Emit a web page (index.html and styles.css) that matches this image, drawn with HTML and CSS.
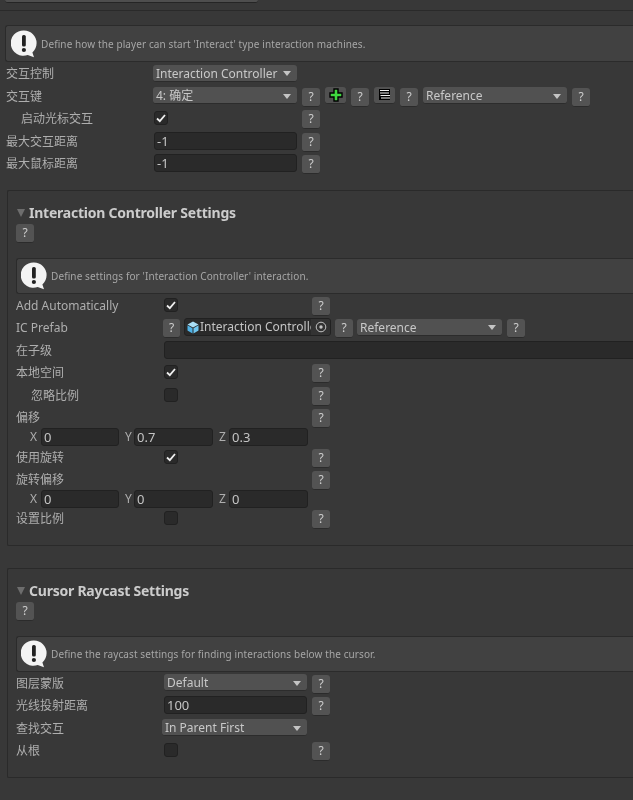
FILE: index.html
```html
<!DOCTYPE html>
<html lang="zh">
<head>
<meta charset="utf-8">
<title>Inspector</title>
<link rel="stylesheet" href="styles.css">
</head>
<body>
<svg class="defs" width="0" height="0" aria-hidden="true">
  <symbol id="bubble" viewBox="0 0 26 28">
    <path d="M13 .5a12.6 12.6 0 0 1 12.6 12.6c0 3.8-1.6 7-4.2 9.3l1.6 4.8-6.3-2.3A12.6 12.6 0 1 1 13 .5z" fill="#f4f4f4"/>
    <rect x="11" y="5" width="3.8" height="11.5" rx="1.6" fill="#222"/>
    <circle cx="12.9" cy="20" r="2.1" fill="#222"/>
  </symbol>
  <symbol id="tick" viewBox="0 0 12 12">
    <path d="M2 6.500l2.800 2.600L10 3" fill="none" stroke="#eee" stroke-width="1.800"/>
  </symbol>
</svg>
<div class="page">
  <div class="top-strip"><div class="top-drop"></div></div>
  <div class="top-gap"></div>

  <div class="help help-top">
    <svg class="bubble"><use href="#bubble"/></svg>
    <span>Define how the player can start 'Interact' type interaction machines.</span>
  </div>

  <div class="rows rows-top">
    <div class="row"><label class="lbl">交互控制</label><div class="drop"><span>Interaction Controller</span><i></i></div></div>
    <div class="row"><label class="lbl">交互键</label><div class="drop"><span>4: 确定</span><i></i></div><button class="q">?</button>
      <div class="icon-btn"><svg width="14" height="14" viewBox="0 0 14 14"><path d="M5 1h4v4h4v4H9v4H5V9H1V5h4z" fill="#3fd83f" stroke="#000" stroke-width="1.400"/></svg></div><button class="q">?</button>
      <div class="icon-btn"><svg width="14" height="14" viewBox="0 0 14 14"><rect x="1" y="1" width="11" height="11" fill="#000"/><path d="M2 2.500h9M2 5h9M2.500 7.500h9.500M3 10h9" stroke="#f2f2f2" stroke-width="1.100"/></svg></div><button class="q">?</button>
      <div class="drop"><span>Reference</span><i></i></div><button class="q">?</button></div>
    <div class="row"><label class="lbl ind">启动光标交互</label><div class="slot"><div class="chk"><svg><use href="#tick"/></svg></div></div><button class="q">?</button></div>
    <div class="row"><label class="lbl">最大交互距离</label><div class="field">-1</div><button class="q">?</button></div>
    <div class="row"><label class="lbl">最大鼠标距离</label><div class="field">-1</div><button class="q">?</button></div>
  </div>

  <section class="sec sec-ic">
    <h2 class="title"><i class="fold"></i>Interaction Controller Settings</h2>
    <button class="q q-solo">?</button>
    <div class="help">
      <svg class="bubble"><use href="#bubble"/></svg>
      <span>Define settings for 'Interaction Controller' interaction.</span>
    </div>
    <div class="rows">
      <div class="row"><label class="lbl">Add Automatically</label><div class="slot"><div class="chk"><svg><use href="#tick"/></svg></div></div><button class="q">?</button></div>
      <div class="row"><label class="lbl">IC Prefab</label><button class="q q-first">?</button>
        <div class="obj">
          <svg class="cube" width="12" height="13" viewBox="0 0 12 13"><path d="M6 .5l5.500 3L6 6.500.5 3.500z" fill="#a9def5"/><path d="M.5 4.300L5.500 7.200v5.300L.5 9.600z" fill="#4fb2e6"/><path d="M11.500 4.300L6.500 7.200v5.300l5-2.900z" fill="#6fc6ef"/></svg>
          <span class="obj-name">Interaction Controller</span>
          <span class="target"><svg width="12" height="12" viewBox="0 0 12 12"><circle cx="6" cy="6" r="4.800" fill="none" stroke="#c4c4c4"/><circle cx="6" cy="6" r="1.700" fill="#c4c4c4"/></svg></span>
        </div>
        <button class="q">?</button>
        <div class="drop"><span>Reference</span><i></i></div><button class="q">?</button></div>
      <div class="row"><label class="lbl">在子级</label><div class="field field-wide"></div></div>
      <div class="row"><label class="lbl">本地空间</label><div class="slot"><div class="chk"><svg><use href="#tick"/></svg></div></div><button class="q">?</button></div>
      <div class="row"><label class="lbl ind">忽略比例</label><div class="slot"><div class="chk"></div></div><button class="q">?</button></div>
      <div class="row"><label class="lbl">偏移</label><div class="slot"></div><button class="q">?</button></div>
      <div class="vec">
        <label>X</label><div class="field">0</div>
        <label>Y</label><div class="field">0.7</div>
        <label>Z</label><div class="field">0.3</div>
      </div>
      <div class="row"><label class="lbl">使用旋转</label><div class="slot"><div class="chk"><svg><use href="#tick"/></svg></div></div><button class="q">?</button></div>
      <div class="row"><label class="lbl">旋转偏移</label><div class="slot"></div><button class="q">?</button></div>
      <div class="vec vec-tight">
        <label>X</label><div class="field">0</div>
        <label>Y</label><div class="field">0</div>
        <label>Z</label><div class="field">0</div>
      </div>
      <div class="row"><label class="lbl">设置比例</label><div class="slot"><div class="chk"></div></div><button class="q">?</button></div>
    </div>
  </section>

  <section class="sec sec-ray">
    <h2 class="title"><i class="fold"></i>Cursor Raycast Settings</h2>
    <button class="q q-solo">?</button>
    <div class="help">
      <svg class="bubble"><use href="#bubble"/></svg>
      <span>Define the raycast settings for finding interactions below the cursor.</span>
    </div>
    <div class="rows">
      <div class="row"><label class="lbl">图层蒙版</label><div class="drop"><span>Default</span><i></i></div><button class="q">?</button></div>
      <div class="row"><label class="lbl">光线投射距离</label><div class="field">100</div><button class="q">?</button></div>
      <div class="row"><label class="lbl">查找交互</label><div class="drop drop-wide"><span>In Parent First</span><i></i></div></div>
      <div class="row"><label class="lbl">从根</label><div class="slot"><div class="chk"></div></div><button class="q">?</button></div>
    </div>
  </section>
</div>
</body>
</html>
```
FILE: styles.css
```css
* { box-sizing: border-box; }
html, body { margin: 0; padding: 0; background: #383838; }
body { width: 633px; height: 800px; overflow: hidden; }
.defs { position: absolute; }
.page {
  width: 633px;
  height: 800px;
  overflow: hidden;
  font: 12px/16px "Noto Sans", "Noto Sans CJK SC", sans-serif;
  color: #b4b4b4;
  filter: blur(0.35px);
}

.top-strip { height: 11px; border-bottom: 1px solid #2a2a2a; }
.top-drop {
  width: 253px;
  height: 3px;
  margin-left: 5px;
  background: #4e4e4e;
  border-bottom: 1px solid #252525;
  border-radius: 0 0 3px 3px;
}
.top-gap { height: 14px; }

.help {
  display: flex;
  align-items: center;
  gap: 4px;
  height: 36px;
  padding-left: 4px;
  background: #414141;
  border: 1px solid #2b2b2b;
  border-right: 0;
  border-radius: 3px 0 0 3px;
  font-size: 10px;
  letter-spacing: .1px;
  color: #a6a6a6;
}
.help-top { margin-left: 5px; height: 37px; padding-left: 5px; }
.bubble { width: 26px; height: 28px; flex: none; }

.rows-top { padding-left: 6px; }
.row { display: flex; align-items: center; height: 22.5px; }
.lbl { width: 147px; flex: none; padding-top: 2px; white-space: nowrap; color: #aeaeae; }
.ind { padding-left: 15px; }
.sec .lbl { width: 148px; }

.drop {
  display: flex;
  align-items: center;
  justify-content: space-between;
  flex: none;
  width: 144px;
  height: 17px;
  padding: 2px 6px 0 3px;
  background: #515151;
  border-bottom: 1px solid #2c2c2c;
  border-radius: 3px;
  color: #c8c8c8;
  white-space: nowrap;
}
.drop i {
  width: 0;
  height: 0;
  border: 4px solid transparent;
  border-top: 5px solid #c4c4c4;
  border-bottom: 0;
}
.q + .drop { margin-left: 5px; }
.sec .drop { width: 143px; }
.sec .drop-wide { width: 145px; margin-left: -2px; }
.sec .obj + .q + .drop { width: 145px; margin-left: 4px; }

.q {
  flex: none;
  width: 18px;
  height: 19px;
  margin: 3px 0 0 5px;
  padding: 0;
  background: #535353;
  border: 0;
  border-bottom: 1px solid #2b2b2b;
  border-radius: 3px;
  font: 12px/16px "Noto Sans", sans-serif;
  color: #cfcfcf;
}
.q-first { width: 17px; margin-left: -1px; }
.q-solo { display: block; margin: 0 0 15px; }

.icon-btn {
  display: flex;
  align-items: center;
  justify-content: center;
  flex: none;
  width: 21px;
  height: 17px;
  margin-left: 5px;
  background: #515151;
  border-bottom: 1px solid #2c2c2c;
  border-radius: 3px;
}

.slot { display: flex; align-items: center; flex: none; width: 144px; }
.sec .slot { width: 143px; }
.chk {
  display: flex;
  align-items: center;
  justify-content: center;
  width: 14px;
  height: 14px;
  margin-left: 1px;
  background: #2a2a2a;
  border: 1px solid #212121;
  border-radius: 3px;
}
.sec .chk { margin-left: 0; }
.chk svg { width: 12px; height: 12px; }

.field {
  flex: none;
  width: 143px;
  height: 18px;
  margin-left: 1px;
  padding: 1px 2px 0;
  background: #2a2a2a;
  border: 1px solid #212121;
  border-radius: 3px;
  font-size: 13px;
  line-height: 15px;
  color: #c4c4c4;
}
.sec .field { margin-left: 0; }
.sec .field-wide { width: 480px; }

.sec {
  margin-left: 7px;
  padding-left: 8px;
  border: 1px solid #2a2a2a;
  border-right: 0;
  border-radius: 2px 0 0 2px;
}
.sec-ic { margin-top: 15px; height: 356px; }
.sec-ray { margin-top: 22px; height: 210px; }
.title {
  display: flex;
  align-items: center;
  gap: 4px;
  height: 20px;
  margin: 12px 0 1px;
  font-size: 14px;
  font-weight: 700;
  line-height: 20px;
  letter-spacing: -.23px;
  color: #cccccc;
}
.fold {
  width: 0;
  height: 0;
  margin-left: 1px;
  border: 4.5px solid transparent;
  border-top: 8px solid #6d6d6d;
  border-bottom: 0;
}

.obj {
  display: flex;
  align-items: center;
  flex: none;
  width: 147px;
  height: 18px;
  margin-left: 4px;
  margin-right: -1px;
  padding-left: 2px;
  background: #2a2a2a;
  border: 1px solid #212121;
  border-radius: 3px;
  overflow: hidden;
  color: #c4c4c4;
}
.cube { flex: none; margin-right: 1px; }
.obj-name { flex: 1; min-width: 0; overflow: hidden; white-space: nowrap; }
.target {
  display: flex;
  align-items: center;
  justify-content: center;
  flex: none;
  width: 19px;
  height: 16px;
  background: #333333;
}

.vec { display: flex; align-items: center; height: 17px; padding-left: 14px; }
.vec-tight { height: 16px; }
.vec label { flex: none; width: 11px; color: #aeaeae; }
.vec .field { width: 79px; margin-right: 6px; }
.vec label:nth-of-type(2) { width: 9px; }
.vec label:nth-of-type(3) { width: 10px; }
.vec label:first-child + .field { width: 78px; }
```
